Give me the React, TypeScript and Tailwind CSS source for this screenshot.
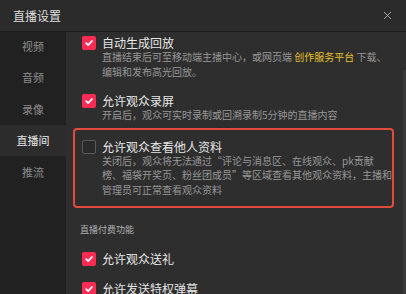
import { X } from "lucide-react";

const font = "font-['Noto_Sans_CJK_SC','Noto_Sans',sans-serif]";

function CheckBox({ checked }: { checked: boolean }) {
  if (!checked) {
    return (
      <span className="mt-[1px] h-[14px] w-[14px] shrink-0 rounded-[2px] border border-[#5a5a5a] bg-[#2a2a2a]" />
    );
  }
  return (
    <span className="mt-[1px] flex h-[14px] w-[14px] shrink-0 items-center justify-center rounded-[2px] bg-[#fe2c55]">
      <svg width="10" height="10" viewBox="0 0 10 10" fill="none">
        <path d="M2.2 5.2 4.2 7.1 7.9 3" stroke="#fff" strokeWidth="1.8" strokeLinecap="round" strokeLinejoin="round" />
      </svg>
    </span>
  );
}

function Option({
  checked,
  title,
  children,
}: {
  checked: boolean;
  title: string;
  children?: React.ReactNode;
}) {
  return (
    <div className="flex items-start gap-[6px]">
      <CheckBox checked={checked} />
      <div>
        <p className="text-[12px] leading-[15px] text-[#e6e6e6]">{title}</p>
        {children ? (
          <p className="text-[10px] leading-[14.5px] text-[#979797]">{children}</p>
        ) : null}
      </div>
    </div>
  );
}

const tabs = ["视频", "音频", "录像", "直播间", "推流"];

export default function App() {
  return (
    <div className={`relative h-[294px] w-[406px] overflow-hidden bg-[#2e2e2e] ${font}`}>
      <div className="flex h-[32px] items-center justify-between border-b border-[#1c1c1c] bg-[#2b2b2b] pl-[13px] pr-[12px]">
        <span className="text-[12px] text-[#dedede]">直播设置</span>
        <X className="h-[13px] w-[13px] text-[#bdbdbd]" strokeWidth={1.6} />
      </div>
      <div className="flex h-[262px]">
        <aside className="flex w-[66px] shrink-0 flex-col bg-[#212121]">
          <div className="-mt-[2px] flex flex-col">
            {tabs.map((t) => (
              <div
                key={t}
                className={
                  t === "直播间"
                    ? "flex h-[31.5px] items-center justify-center bg-[#2c2c2c] text-[11px] text-[#e8e8e8]"
                    : "flex h-[31.5px] items-center justify-center text-[11px] text-[#8c8c8c]"
                }
              >
                {t}
              </div>
            ))}
          </div>
        </aside>
        <main className="flex-1 pl-[7px] pr-[12px] pt-[3px]">
          <div className="pl-[9px]">
            <Option checked title="自动生成回放">
              直播结束后可至移动端主播中心，或网页端 <span className="text-[#e8c22c]">创作服务平台</span> 下载、
              <br />
              编辑和发布高光回放。
            </Option>
          </div>
          <div className="mt-[14px] pl-[9px]">
            <Option checked title="允许观众录屏">
              开启后，观众可实时录制或回溯录制5分钟的直播内容
            </Option>
          </div>
          <div className="mt-[5px] rounded-[4px] border-2 border-[#e34b3e] pb-[9px] pl-[7px] pt-[9px]">
            <Option checked={false} title="允许观众查看他人资料">
              关闭后，观众将无法通过“评论与消息区、在线观众、pk贡献
              <br />
              榜、福袋开奖页、粉丝团成员”等区域查看其他观众资料，主播和
              <br />
              管理员可正常查看观众资料
            </Option>
          </div>
          <p className="mt-[16px] pl-[7px] text-[9px] leading-[12px] text-[#b0b0b0]">直播付费功能</p>
          <div className="mt-[15px] pl-[9px]">
            <Option checked title="允许观众送礼" />
          </div>
          <div className="mt-[15px] pl-[9px]">
            <Option checked title="允许发送特权弹幕" />
          </div>
        </main>
      </div>
      <div className="absolute right-0 top-[70px] h-[224px] w-[3px] bg-[#3a3a3a]" />
    </div>
  );
}
